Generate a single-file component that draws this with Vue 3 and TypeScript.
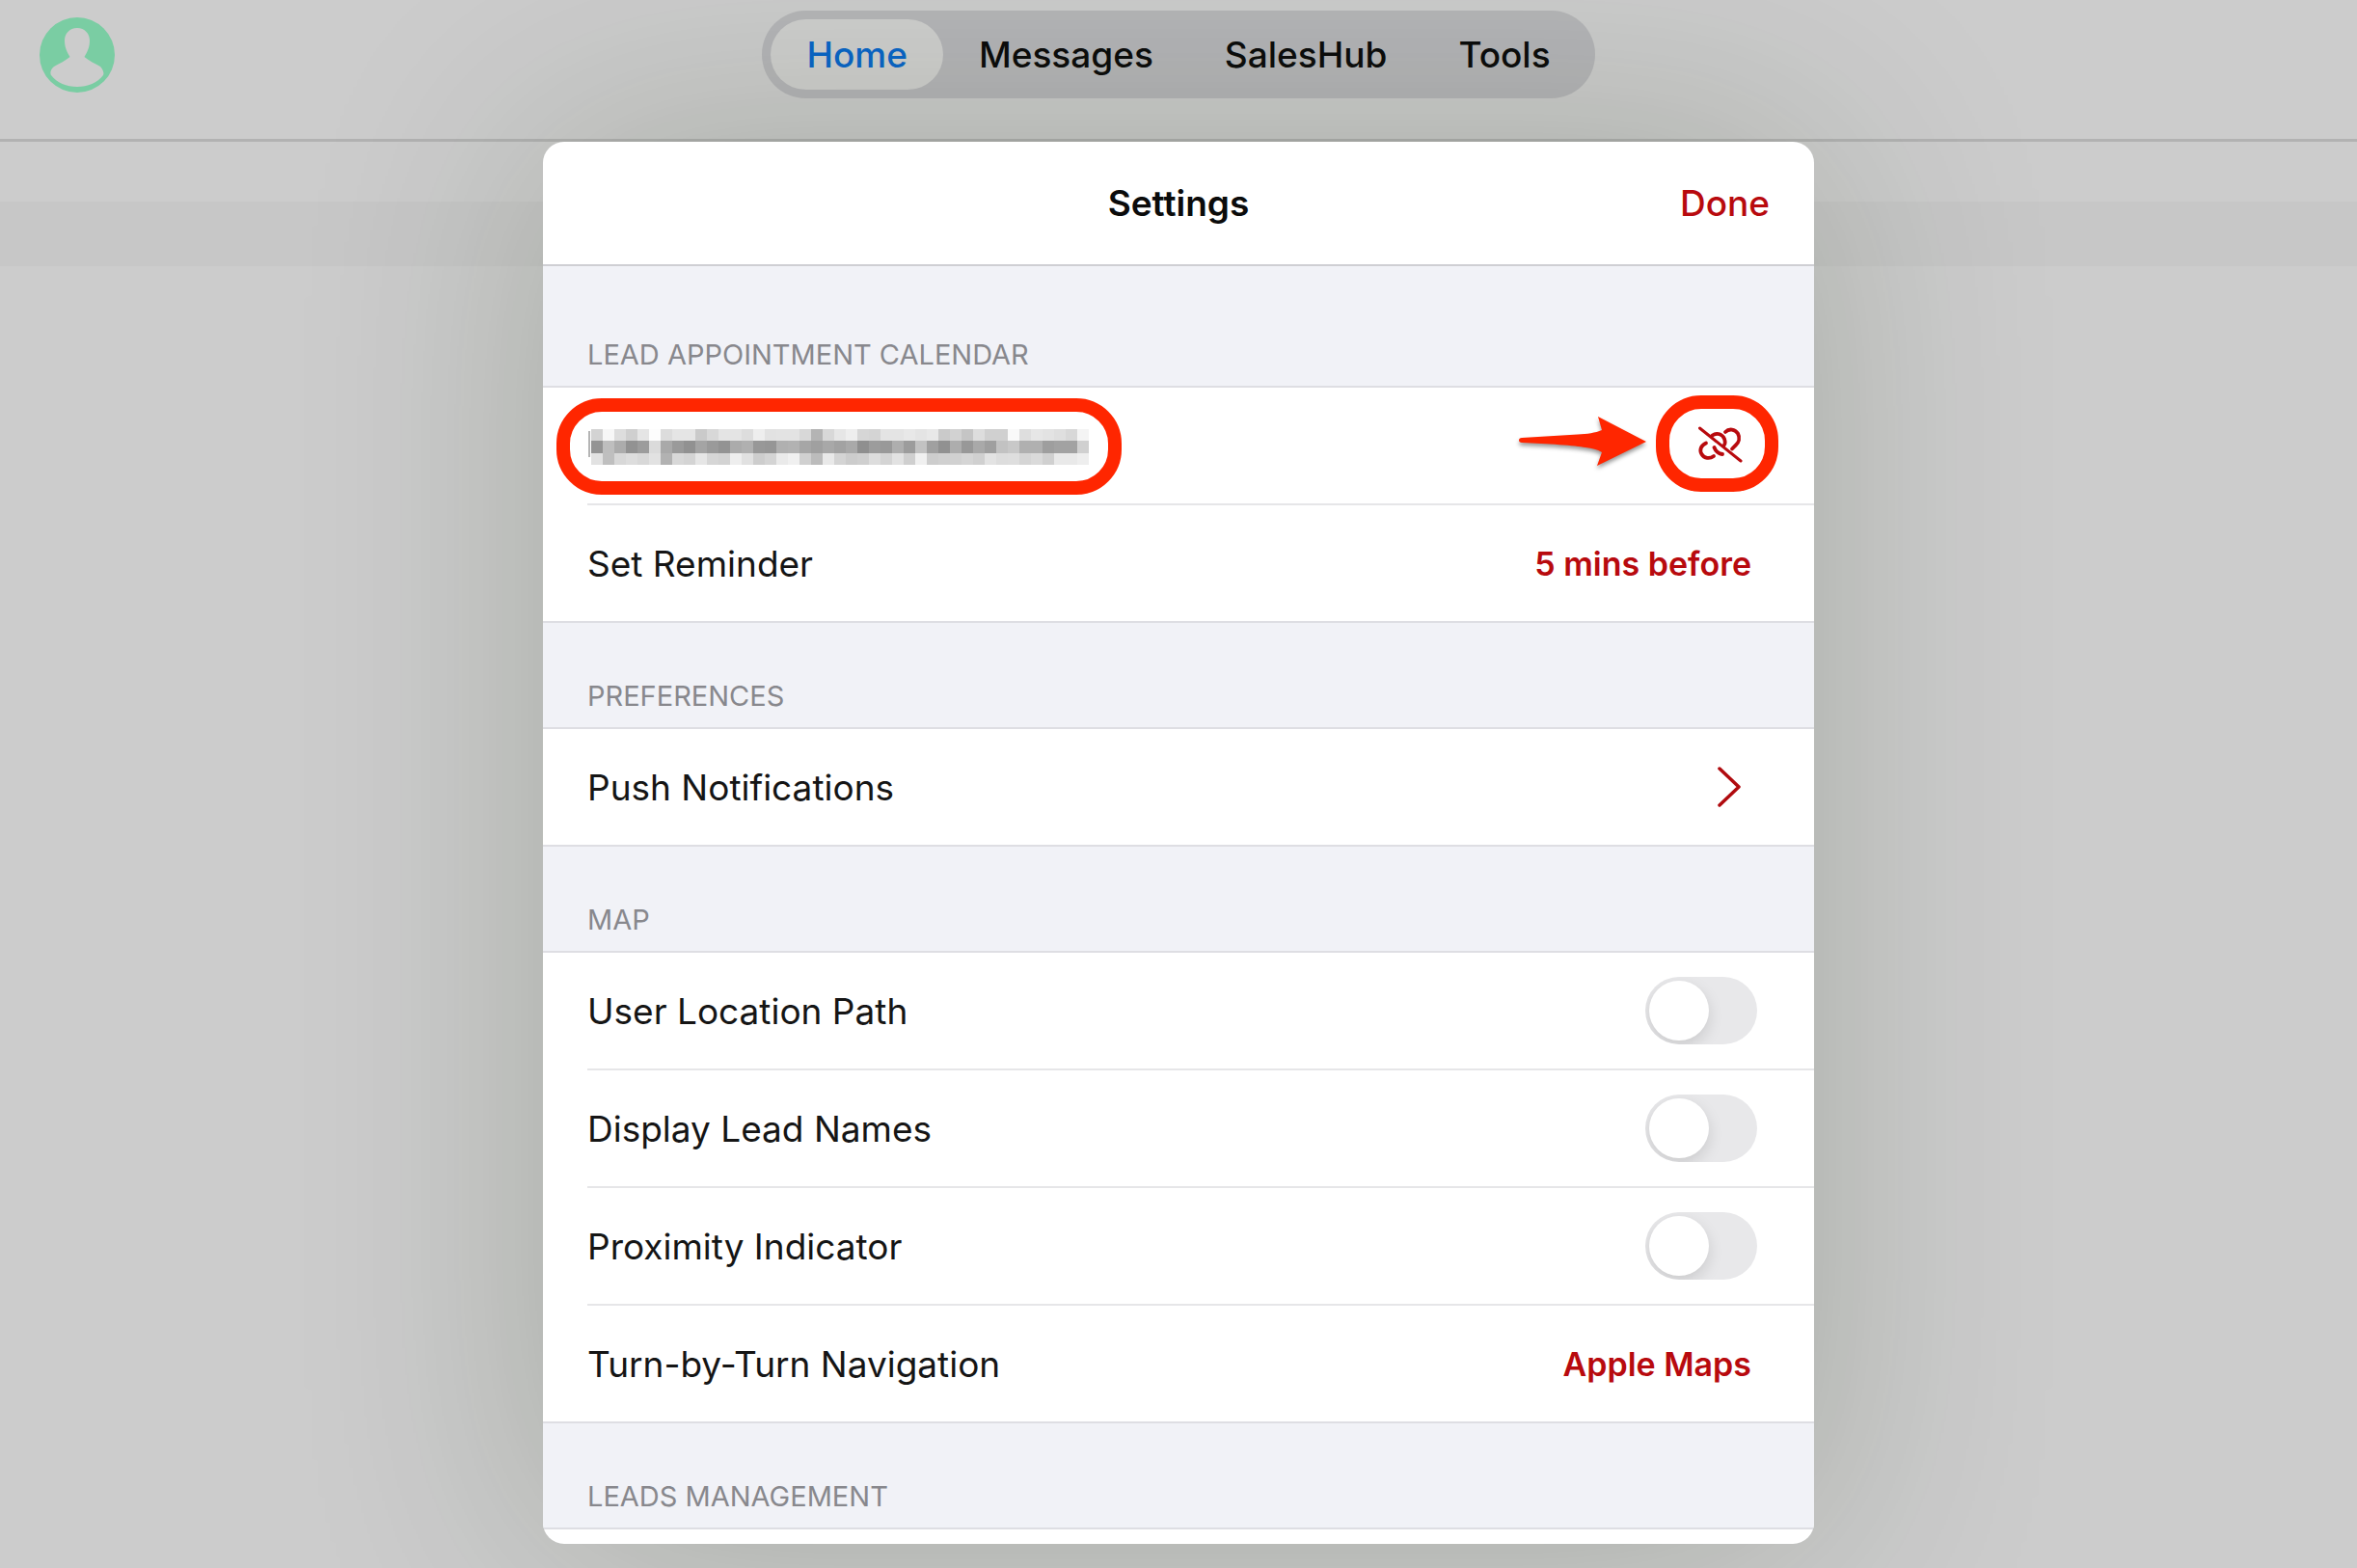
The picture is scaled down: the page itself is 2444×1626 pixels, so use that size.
<script setup lang="ts">
import { ref } from 'vue'

interface Row {
  label: string
  kind: 'value' | 'link' | 'toggle'
  value?: string
}

interface Section {
  title: string
  rows: Row[]
}

const tabs = ['Home', 'Messages', 'SalesHub', 'Tools']
const activeTab = ref('Home')

const sections: Section[] = [
  {
    title: 'Preferences',
    rows: [{ label: 'Push Notifications', kind: 'link' }],
  },
  {
    title: 'Map',
    rows: [
      { label: 'User Location Path', kind: 'toggle' },
      { label: 'Display Lead Names', kind: 'toggle' },
      { label: 'Proximity Indicator', kind: 'toggle' },
      { label: 'Turn-by-Turn Navigation', kind: 'value', value: 'Apple Maps' },
    ],
  },
]

const toggles = ref<Record<string, boolean>>({})

const idFor = (label: string) => label.toLowerCase().replace(/\s+/g, '-')

// Grey level of each block in the redacted account address, one string per line
const mosaicLines = [
  { y: 4, h: 12, levels: 'd3f7ddcfe5fddce5e5cad8e4e4ddeee2e3e3d8b4d8e6eed6d4e4e4e8e4e8cad2c5ddd0d0f9dee6e3dfd8f4' },
  { y: 16, h: 13, levels: '94beac929cdba99a91a49a93abb09896b0b2a6a0a8a2a98f9c99ae9cc2a091ad98a99fc2c8b0b09ea2a2d0' },
  { y: 29, h: 12, levels: 'e2bfd8ddd8e2b2d8d4e6d6d3eee1cdd4eaf0d0bce9d4cccfddd4e2cff0cdd0d1d5d0e3ddded5dad0e9e9ee' },
]

const mosaic = mosaicLines.flatMap(({ y, h, levels }) =>
  (levels.match(/../g) ?? []).map((g, i) => ({ x: 4 + i * 12, y, h, fill: `#${g}${g}${g}` })),
)
</script>

<template>
  <div class="screen">
    <header class="topbar">
      <button class="avatar" type="button" aria-label="Profile">
        <svg viewBox="0 0 78 78" aria-hidden="true">
          <circle cx="39" cy="39" r="39" fill="#7acda3" />
          <path
            d="M39 11C31 11 26 17 26 24C26 31 28.500 36 31.500 41C27 45 20 48 15 51C11 54 11 58 12 60C18 68 28 72 39 72C50 72 60 68 66 60C67 58 66 54 63 51C58 48 51 45 46.500 41C49.500 36 52 31 52 24C52 17 47 11 39 11Z"
            fill="#cccccc"
          />
        </svg>
      </button>
      <nav class="tabs" aria-label="Main">
        <button
          v-for="tab in tabs"
          :key="tab"
          type="button"
          class="tab"
          :class="{ active: tab === activeTab }"
          @click="activeTab = tab"
        >
          {{ tab }}
        </button>
      </nav>
    </header>
    <div class="band"></div>

    <div class="overlay">
      <section class="sheet" role="dialog" aria-labelledby="sheet-title">
        <header class="sheet-head">
          <h1 id="sheet-title">Settings</h1>
          <button class="done" type="button">Done</button>
        </header>

        <div class="group">
          <h2 class="group-title first">Lead Appointment Calendar</h2>
          <div class="rows">
            <div class="row">
              <div class="account">
                <svg class="mosaic" viewBox="0 0 520 42" role="img" aria-label="Hidden account address">
                  <rect x="1" y="6" width="2" height="27" fill="#b4b4b4" />
                  <rect
                    v-for="(c, i) in mosaic"
                    :key="i"
                    :x="c.x"
                    :y="c.y"
                    width="12"
                    :height="c.h"
                    :fill="c.fill"
                    shape-rendering="crispEdges"
                  />
                </svg>
                <span class="ring"></span>
              </div>
              <button class="unlink" type="button" aria-label="Unlink calendar">
                <svg class="unlink-icon" viewBox="0 0 48 40" aria-hidden="true">
                  <g fill="none" stroke="#b80a0e" stroke-width="3.800" stroke-linecap="round">
                    <path d="M2.500 2L45 36" stroke-width="3" />
                    <path d="M9 17.500C3.500 20 2 25 4.500 29C7 33.500 13 34 17 31" />
                    <path d="M15.500 9.500C21 6 26 8.500 28 13C29 16 28.500 19 27.500 20" />
                    <path d="M17.500 22C19 26 22.500 28.500 26 29" />
                    <path d="M29 6C33 2 39 3 42 7.500C44.500 12 43 17 39.500 20L36 23.500" />
                  </g>
                </svg>
                <span class="ring"></span>
                <svg class="arrow" viewBox="0 0 140 60" aria-hidden="true">
                  <path
                    d="M4 26C2 26 1 27 1 28.500C1 30 2 31 4 31C30 32 60 34 70 36C77 37 82 38 87 41L82 55L133 30L83 4L87 18C80 21 72 22 62 22.500Z"
                    fill="#ff2600"
                  />
                </svg>
              </button>
            </div>
            <div class="row">
              <span class="label">Set Reminder</span>
              <button class="value" type="button">5 mins before</button>
            </div>
          </div>
        </div>

        <div v-for="section in sections" :key="section.title" class="group">
          <h2 class="group-title">{{ section.title }}</h2>
          <div class="rows">
            <div v-for="row in section.rows" :key="row.label" class="row">
              <label v-if="row.kind === 'toggle'" class="label" :for="idFor(row.label)">{{ row.label }}</label>
              <span v-else class="label">{{ row.label }}</span>

              <input
                v-if="row.kind === 'toggle'"
                :id="idFor(row.label)"
                v-model="toggles[row.label]"
                class="switch"
                type="checkbox"
                role="switch"
              />
              <button v-else-if="row.kind === 'value'" class="value" type="button">{{ row.value }}</button>
              <button v-else class="more" type="button" :aria-label="`Open ${row.label}`">
                <svg viewBox="0 0 24 42" aria-hidden="true">
                  <path d="M2 2L22 21L2 40" fill="none" stroke="#b00a0e" stroke-width="3.500" stroke-linecap="round" stroke-linejoin="round" />
                </svg>
              </button>
            </div>
          </div>
        </div>

        <div class="group">
          <h2 class="group-title">Leads Management</h2>
        </div>
      </section>
    </div>
  </div>
</template>

<style>
body {
  margin: 0;
}
</style>

<style scoped>
.screen {
  position: relative;
  min-height: 100vh;
  overflow: hidden;
  background: #cccccc;
  color: #151515;
  font-family: Inter, 'Liberation Sans', sans-serif;
}

button {
  margin: 0;
  padding: 0;
  border: 0;
  background: none;
  color: inherit;
  font: inherit;
  cursor: pointer;
}

h1,
h2 {
  margin: 0;
}

svg {
  display: block;
}

.topbar {
  box-sizing: border-box;
  display: grid;
  grid-template-columns: 1fr auto 1fr;
  align-items: center;
  height: 147px;
  padding: 0 41px 31px;
  border-bottom: 3px solid #b2b2b2;
}

.avatar {
  width: 78px;
  height: 78px;
}

.tabs {
  display: flex;
  padding: 9px;
  border-radius: 46px;
  background: #b5b5b8;
}

.tab {
  height: 73px;
  padding: 0 37px;
  border-radius: 37px;
  color: #0c0c0c;
  font-size: 37px;
  font-weight: 500;
}

.tab.active {
  background: #cfcfce;
  color: #0a66c8;
}

.band {
  height: 67px;
  margin-top: 62px;
  background: #c7c7c7;
}

.overlay {
  box-sizing: border-box;
  position: absolute;
  inset: 0;
  display: flex;
  justify-content: center;
  align-items: flex-start;
  padding: 147px 24px 25px;
}

.sheet {
  width: 1318px;
  height: 100%;
  overflow: hidden;
  border-radius: 22px;
  background: #ffffff;
  box-shadow: 0 0 280px rgba(20, 40, 0, 0.2);
}

.sheet-head {
  box-sizing: border-box;
  display: grid;
  grid-template-columns: 1fr auto 1fr;
  align-items: center;
  height: 129px;
  padding: 0 46px;
  border-bottom: 2px solid #cfcfd3;
}

.sheet-head h1 {
  grid-column: 2;
  color: #0b0b0b;
  font-size: 37px;
  font-weight: 600;
}

.done {
  justify-self: end;
  color: #b80a0e;
  font-size: 37px;
  font-weight: 500;
}

.group-title {
  box-sizing: border-box;
  display: flex;
  align-items: flex-end;
  height: 110px;
  padding: 0 46px 14px;
  border-bottom: 2px solid #dedee3;
  background: #f1f2f7;
  color: #88888d;
  font-size: 29px;
  font-weight: 400;
  line-height: 36px;
  text-transform: uppercase;
}

.group-title.first {
  height: 126px;
}

.rows {
  padding-left: 46px;
  border-bottom: 2px solid #dedee3;
}

.row {
  box-sizing: border-box;
  display: flex;
  justify-content: space-between;
  align-items: center;
  height: 122px;
  padding-right: 65px;
  border-bottom: 2px solid #e6e6e8;
}

.row:last-child {
  height: 120px;
  border-bottom: 0;
}

.label {
  font-size: 37px;
}

.value {
  color: #b80a0e;
  font-size: 34px;
  font-weight: 600;
}

.more {
  width: 24px;
  height: 42px;
  margin-right: 11px;
}

.account,
.unlink {
  position: relative;
}

.mosaic {
  width: 520px;
  height: 42px;
}

.unlink {
  width: 48px;
  height: 40px;
  margin-right: 8px;
}

.ring {
  position: absolute;
  inset: -28px -34px -30px -32px;
  border: 14px solid #ff2600;
  border-radius: 47px;
  pointer-events: none;
}

.unlink .ring {
  inset: -32px -36px -28px -43px;
}

.arrow {
  position: absolute;
  right: 94px;
  top: -14px;
  width: 140px;
  height: 60px;
  filter: drop-shadow(0 3px 2px rgba(0, 0, 0, 0.4));
  pointer-events: none;
}

.switch {
  appearance: none;
  box-sizing: border-box;
  width: 116px;
  height: 70px;
  margin: 0 -6px 0 0;
  padding: 4px;
  border-radius: 35px;
  background: #e8e8ea;
  overflow: hidden;
  cursor: pointer;
}

.switch::before {
  content: '';
  display: block;
  width: 62px;
  height: 62px;
  border-radius: 50%;
  background: #ffffff;
  box-shadow: 0 6px 16px rgba(0, 0, 0, 0.13);
}

.switch:checked {
  background: #34c759;
}

.switch:checked::before {
  margin-left: auto;
}
</style>
